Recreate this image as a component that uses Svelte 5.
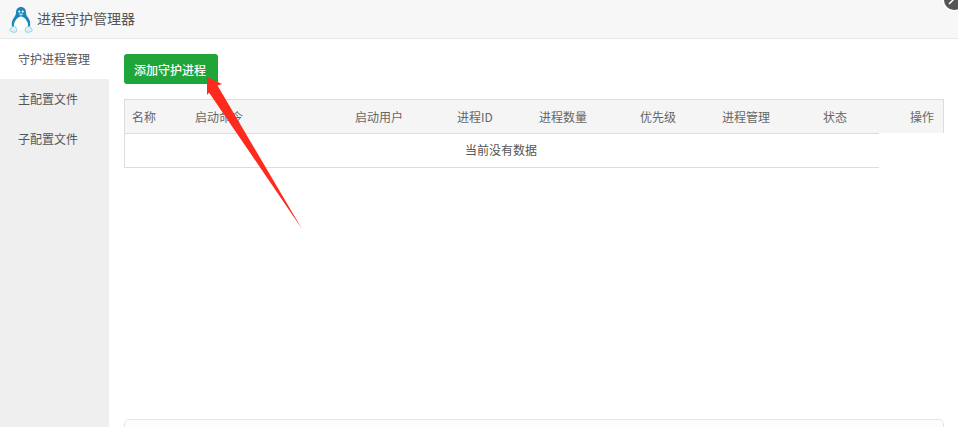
<script>
  const tabs = ['守护进程管理', '主配置文件', '子配置文件'];
  const cols = ['名称', '启动命令', '启动用户', '进程ID', '进程数量', '优先级', '进程管理', '状态', '操作'];
</script>

<div class="win">
  <header class="bar">
    <svg class="logo" width="24" height="28" viewBox="0 0 24 28" aria-hidden="true">
      <path d="M12 1C8.800 1 7 3.300 7 6.200c0 2.200-.6 3.500-2 5.300C3.400 13.700 2.600 16.300 2.800 19c.1 1.500.5 2.600 1.200 3.500h16c.7-.9 1.100-2 1.200-3.500.2-2.700-.6-5.300-2.200-7.500-1.400-1.800-2-3.100-2-5.300C17 3.300 15.200 1 12 1z" fill="#1a86bb"/>
      <path d="M12 10.500c-1.800.3-3.500 1.200-4.800 3.100C5.800 15.700 4.700 17.500 4.900 19.500c.2 2.600 3.200 4.500 7.100 4.500s6.900-1.900 7.100-4.500c.2-2-.9-3.800-2.300-5.900-1.300-1.900-3-2.800-4.800-3.100z" fill="#fff"/>
      <circle cx="10.300" cy="5.600" r="1.100" fill="#fff"/>
      <circle cx="13.700" cy="5.600" r="1.100" fill="#fff"/>
      <path d="M9.500 8l2.500-.8 2.500.8-2.500 1.700z" fill="#a8d8ee"/>
      <path d="M.6 24.300c1-.6 1.200-2.400 2.200-3.300 1.200-1 3.400-.6 4.200.6.700 1 1 2.800.5 3.900-1.200 1.300-5.500 1-6.900-1.200zM23.400 24.300c-1-.6-1.200-2.400-2.200-3.300-1.200-1-3.400-.6-4.200.6-.7 1-1 2.800-.5 3.900 1.200 1.300 5.500 1 6.900-1.200z" fill="#dff2fb" stroke="#7cc4e4" stroke-width=".8"/>
    </svg>
    <span class="title">进程守护管理器</span>
  </header>

  <div class="body">
    <nav class="side">
      {#each tabs as tab, i}
        <div class="tab" class:on={i === 0}>{tab}</div>
      {/each}
    </nav>

    <main class="main">
      <button class="add">添加守护进程</button>

      <div class="table">
        <div class="thead">
          {#each cols as col}
            <span class="th">{col}</span>
          {/each}
        </div>
        <div class="empty">当前没有数据</div>
      </div>

      <div class="panel"></div>
    </main>
  </div>

  <div class="close">
    <svg width="20" height="20" viewBox="0 0 20 20" aria-hidden="true">
      <path d="M5 14l5-5" stroke="#fff" stroke-width="1.500" fill="none"/>
    </svg>
  </div>

  <svg class="arrow" width="958" height="427" viewBox="0 0 958 427" aria-hidden="true">
    <path d="M207 77L222 84 217.500 85.500 302 229 209 92.500 207 95z" fill="#fe2a1e"/>
  </svg>
</div>

<style>
  :global(body) {
    margin: 0;
    background: #fff;
    font-family: "Noto Sans CJK SC", "Noto Sans", sans-serif;
    font-size: 12px;
    color: #555;
  }
  .win {
    position: relative;
    width: 958px;
    height: 427px;
    overflow: hidden;
  }
  .bar {
    display: flex;
    align-items: center;
    height: 38px;
    padding-left: 9px;
    gap: 4px;
    background: #f7f7f7;
    border-bottom: 1px solid #e8e8e8;
  }
  .logo { flex: none; margin-top: 1px; }
  .title {
    font-size: 14px;
    color: #555;
    margin-top: -3px;
  }
  .body {
    display: flex;
    height: 388px;
  }
  .side {
    width: 109px;
    flex: none;
    background: #efefef;
  }
  .tab {
    height: 40px;
    line-height: 40px;
    padding-left: 18px;
    color: #555;
  }
  .tab.on { background: #fff; }
  .main {
    flex: 1;
    padding: 15px 14px 0 15px;
    display: flex;
    flex-direction: column;
    align-items: stretch;
    min-width: 0;
  }
  .add {
    flex: none;
    align-self: flex-start;
    width: 94px;
    height: 30px;
    padding: 0 2px 0 0;
    border: 0;
    border-radius: 3px;
    background: #20a53a;
    color: #fff;
    font: 500 12px "Noto Sans CJK SC", sans-serif;
  }
  .table {
    flex: none;
    margin-top: 15px;
  }
  .thead {
    display: grid;
    grid-template-columns: 63px 160px 102px 82px 101px 82px 101px 60px 1fr;
    height: 34px;
    padding: 0 9px 0 7px;
    background: #f5f5f5;
    border: 1px solid #ddd;
    border-bottom: 0;
    box-sizing: border-box;
  }
  .th { color: #666; line-height: 34px; white-space: nowrap; }
  .th:last-child { text-align: right; }
  .empty {
    width: 752px;
    height: 33px;
    line-height: 32px;
    padding-right: 2px;
    text-align: center;
    border: 0 solid #ddd;
    border-width: 1px 0 1px 1px;
    color: #555;
  }
  .panel {
    flex: none;
    margin-top: 251px;
    height: 30px;
    background: #fcfcfc;
    border: 1px solid #e6e6e6;
    border-radius: 5px;
  }
  .close {
    position: absolute;
    left: 944px;
    top: -10px;
    width: 20px;
    height: 20px;
    border-radius: 50%;
    background: #555;
    box-shadow: 0 0 0 1.500px #fff;
    overflow: hidden;
  }
  .close svg { display: block; }
  .arrow {
    position: absolute;
    inset: 0;
    pointer-events: none;
  }
</style>
